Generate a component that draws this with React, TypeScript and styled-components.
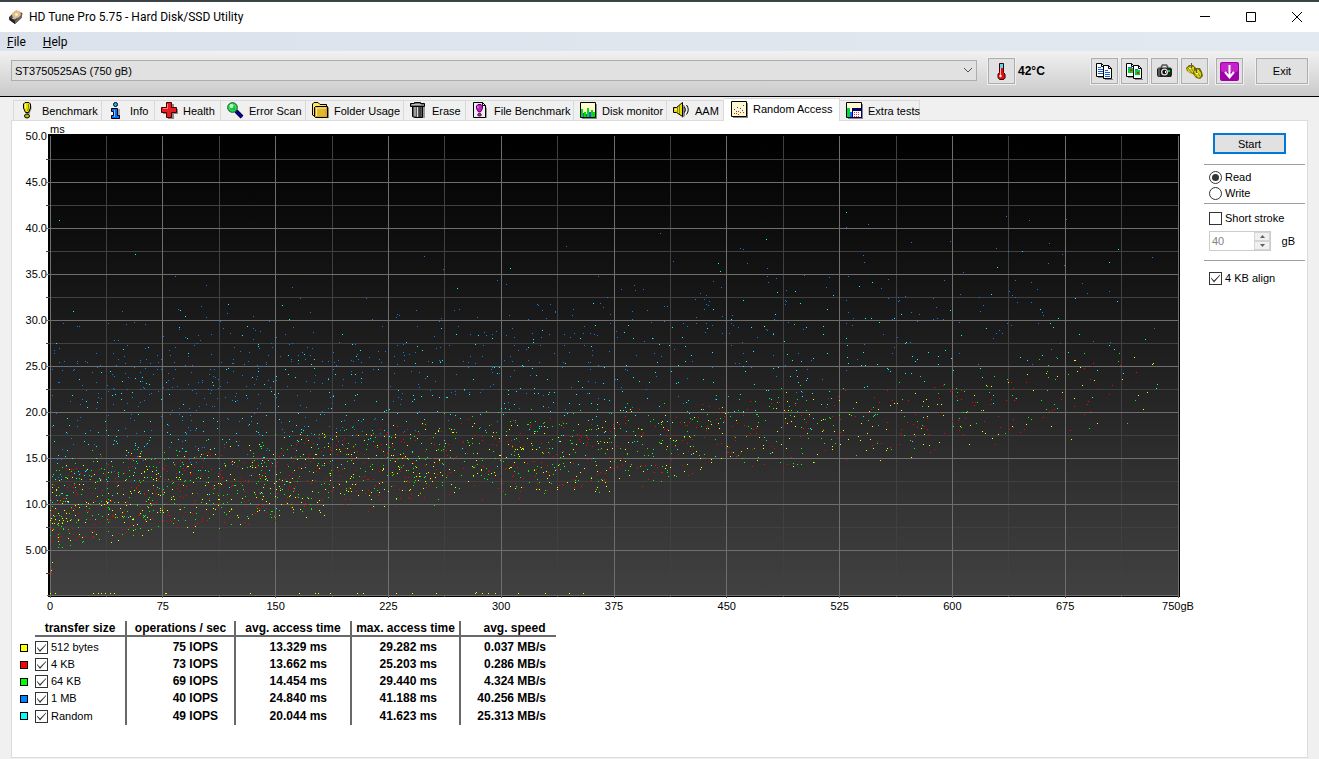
import React, { useState } from "react";
import styled, { createGlobalStyle, css } from "styled-components";

const GlobalStyle = createGlobalStyle`
  *, *::before, *::after { box-sizing: border-box; }
  body {
    margin: 0;
    background: #f0f0f0;
    color: #000;
    font: 11px/14px "Liberation Sans", Arial, sans-serif;
  }
  button, input, select { font: inherit; color: inherit; }
`;

/* ---------- window frame ---------- */

const Window = styled.div`
  display: flex;
  flex-direction: column;
  min-height: 100vh;
  border-top: 2px solid #3b4347;
`;

const TitleBar = styled.header`
  display: flex;
  align-items: center;
  height: 30px;
  padding-left: 8px;
  background: #fff;
`;

const Title = styled.h1`
  flex: 1;
  margin: 0 0 0 5px;
  font: 400 12px/16px Roboto, "Segoe UI", sans-serif;
`;

const WindowButton = styled.button`
  display: grid;
  place-items: center;
  width: 46px;
  height: 30px;
  padding: 0 0 0 2px;
  border: 0;
  background: none;
`;

const MenuBar = styled.nav`
  display: flex;
  gap: 17px;
  height: 19px;
  padding-left: 7px;
  background: linear-gradient(90deg, #dbe2eb, #e2e9f1);
`;

const MenuItem = styled.button`
  padding: 0;
  border: 0;
  background: none;
  font: 400 12px/20px Roboto, "Segoe UI", sans-serif;
`;

/* ---------- toolbar ---------- */

const Toolbar = styled.div`
  display: flex;
  align-items: flex-start;
  height: 46px;
  padding: 7px 11px 0;
  border-bottom: 1px solid #000;
  background: linear-gradient(#f1f1f1, #cacaca);
`;

const DriveField = styled.div`
  position: relative;
  flex: 1;
  margin: 2px 11px 0 0;
`;

const DriveSelect = styled.select`
  display: block;
  width: 100%;
  height: 21px;
  padding: 0 3px;
  border: 1px solid #adadad;
  border-radius: 0;
  background: #e1e1e1;
  appearance: none;
`;

const DriveArrow = styled.svg`
  position: absolute;
  top: 7px;
  right: 4px;
  pointer-events: none;
`;

const ToolButton = styled.button<{ $wide?: boolean }>`
  display: grid;
  place-items: center;
  width: ${(p) => (p.$wide ? "52px" : "27px")};
  height: 26px;
  padding: 0;
  border: 1px solid #adadad;
  background: #e1e1e1;
  box-shadow: 0 0 0 1px #f0f0f0;
`;

const Temperature = styled.output`
  width: 76px;
  padding-left: 3px;
  font: 700 12px/27px "Liberation Sans", Arial, sans-serif;
`;

const ToolGroup = styled.div`
  display: flex;
  gap: 3px;
  margin-right: 8px;
`;

const LastTool = styled.div`
  margin-right: 13px;
`;

/* ---------- tabs ---------- */

const TabStrip = styled.div`
  display: flex;
  align-items: flex-end;
  height: 23px;
  padding-left: 13px;
`;

const Tab = styled.button<{ $width: number; $active: boolean }>`
  display: grid;
  grid-template-columns: 17px auto;
  align-items: center;
  justify-content: start;
  column-gap: 5px;
  width: ${(p) => p.$width}px;
  height: 20px;
  padding: 0 0 0 6px;
  border: 1px solid #d9d9d9;
  border-width: 1px 1px 0 0;
  background: #f0f0f0;
  white-space: nowrap;

  &:first-child {
    border-left-width: 1px;
  }

  ${(p) =>
    p.$active &&
    css`
      height: 23px;
      margin-bottom: -1px;
      padding: 0 0 2px 7px;
      background: #fff;
      z-index: 1;
    `}
`;

const Panel = styled.main`
  display: flex;
  flex: 1;
  margin: 0 11px 1px;
  border: 1px solid #dcdcdc;
  background: #fff;
`;

const Results = styled.div`
  flex: 1;
  min-width: 0;
`;

/* ---------- chart ---------- */

const ChartGrid = styled.figure`
  display: grid;
  grid-template-columns: 34px 1fr;
  margin: 0;
`;

const Unit = styled.span`
  grid-column: 2;
  height: 13px;
  padding: 1px 0 0 4px;
`;

const YAxis = styled.div`
  margin: -7px -1px 0 0;
`;

const YLabel = styled.div`
  height: 46px;
  line-height: 18px;
  text-align: right;
`;

const Plot = styled.svg`
  display: block;
  width: 100%;
  height: 464px;
`;

const XAxis = styled.div`
  grid-column: 1 / -1;
  display: flex;
  justify-content: space-between;
  margin: 1px -17px 0 18px;
`;

const XLabel = styled.span`
  width: 40px;
  text-align: center;
`;

/* ---------- results table ---------- */

const Table = styled.table`
  margin: 8px 0 0 8px;
  border-collapse: separate;
  border-spacing: 0;
  table-layout: fixed;
  width: 536px;
`;

const Head = styled.th<{ $width: number; $bare?: boolean; $last?: boolean }>`
  width: ${(p) => p.$width}px;
  height: 16px;
  padding: 1px 0 0;
  border: solid #696969;
  border-width: ${(p) => (p.$bare ? "0" : p.$last ? "0 0 2px" : "0 2px 2px 0")};
  padding-left: ${(p) => (p.$last ? "12px" : "0")};
  font: 700 12px/13px "Liberation Sans", Arial, sans-serif;
  white-space: nowrap;
`;

const Cell = styled.td<{ $pad?: number; $rule?: boolean }>`
  height: 17px;
  padding: 0 ${(p) => p.$pad ?? 0}px 0 0;
  border-right: ${(p) => (p.$rule ? "2px solid #696969" : "0")};
  font: 700 12px/17px "Liberation Sans", Arial, sans-serif;
  text-align: right;

  tr:first-child > & {
    height: 19px;
    padding-top: 2px;
  }
  tr:last-child > & {
    height: 18px;
  }
`;

const Swatch = styled.span<{ $color: string }>`
  display: block;
  width: 8px;
  height: 8px;
  border: 1px solid #000;
  background: ${(p) => p.$color};
`;

/* ---------- form controls ---------- */

const CheckLabel = styled.label`
  display: flex;
  align-items: center;
  gap: 3px;
  height: 17px;
  font: 400 11px/17px "Liberation Sans", Arial, sans-serif;
`;

const CheckBox = styled.input.attrs({ type: "checkbox" })`
  flex: none;
  width: 13px;
  height: 13px;
  margin: 0;
  border: 1px solid #333;
  background: #fff;
  appearance: none;

  &:checked::before {
    content: "";
    display: block;
    width: 11px;
    height: 11px;
    background: #333;
    clip-path: polygon(1px 5px, 4px 8px, 10px 2px, 10px 3px, 4px 10px, 1px 6px);
  }
`;

const Radio = styled.input.attrs({ type: "radio" })`
  display: grid;
  place-items: center;
  flex: none;
  width: 13px;
  height: 13px;
  margin: 0;
  border: 1px solid #333;
  border-radius: 50%;
  background: #fff;
  appearance: none;

  &:checked::before {
    content: "";
    width: 7px;
    height: 7px;
    border-radius: 50%;
    background: #333;
  }
`;

const Side = styled.aside`
  width: 101px;
  margin: 12px 2px 0 23px;
`;

const StartButton = styled.button`
  display: block;
  width: 73px;
  height: 21px;
  margin: 0 0 10px 9px;
  padding: 0;
  border: 2px solid #0078d7;
  background: #e1e1e1;
`;

const Section = styled.fieldset<{ $height: number; $top: number }>`
  height: ${(p) => p.$height}px;
  margin: 0;
  padding: ${(p) => p.$top}px 0 0 5px;
  border: 0;
  border-top: 1px solid #a0a0a0;

  & > label {
    height: 16px;
  }
`;

const SizeRow = styled.div`
  display: flex;
  align-items: center;
  justify-content: space-between;
  margin-top: 5px;
  padding-right: 10px;
`;

const Spin = styled.div`
  display: flex;
  width: 62px;
  height: 20px;
  border: 1px solid #ccc;
`;

const SpinInput = styled.input`
  width: 44px;
  padding: 0 2px;
  border: 0;
  background: #fff;
  color: #838383;
`;

const SpinButtons = styled.div`
  display: grid;
  flex: 1;
`;

const SpinButton = styled.button`
  display: grid;
  place-items: center;
  padding: 0;
  border: 1px solid #d4d4d4;
  background: #f0f0f0;
`;

/* ---------- measurement data ---------- */

type Series = "bytes512" | "kb4" | "kb64" | "mb1" | "random";

const COLORS: Record<Series, string> = {
  mb1: "#0080ff",
  random: "#00ffff",
  kb64: "#00ff00",
  kb4: "#ff0000",
  bytes512: "#ffff00",
};

// Slow samples, as x,y pairs in plot units (1128 x 460, origin at the top left).
const SLOW: Record<Series, string> = {
  mb1:
    "13,187 27,190 29,190 46,217 4,214 4,217 9,212 58,187 64,204 68,204 72,175 76,188 84,186 95,188 77,209 63,217 74,220 95,212 107,219 125,140 156,149 128,173 151,170 156,181 166,184 129,193 113,200 135,201 148,199 150,204 147,207 144,209 161,198 125,211 119,214 120,219 138,220 161,218 177,177 170,185 173,192 180,197 184,211 190,215 199,216 203,180 203,192 205,194 210,195 203,203 219,185 209,212 221,207 222,211 218,219 242,151 250,162 260,176 258,184 243,191 263,196 235,198 226,201 239,208 242,207 257,211 262,212 252,216 248,219 260,219 230,220 316,162 322,183 306,184 332,190 289,206 305,208 283,216 307,218 328,215 335,215 319,221 374,120 366,174 347,178 349,179 346,181 367,190 347,209 353,208 353,216 354,219 359,218 365,216 344,220 " +
    "393,133 447,144 456,148 516,110 548,140 404,174 409,173 427,181 459,179 478,183 487,168 488,169 492,174 496,182 500,168 505,175 505,176 523,173 522,179 550,167 553,171 557,161 560,178 391,182 389,185 408,190 420,198 434,196 436,199 442,198 446,195 462,192 456,199 464,201 482,197 491,201 499,198 514,198 520,201 524,197 533,197 534,190 540,197 544,198 547,199 560,187 384,200 386,212 390,211 399,209 433,209 432,220 420,220 464,209 468,214 460,220 476,213 490,209 504,217 514,209 519,216 534,209 542,214 542,219 559,215 571,153 584,149 585,154 593,153 610,97 623,125 582,175 597,174 614,170 617,170 582,183 601,186 614,185 566,195 567,201 594,205 603,202 586,219 604,217 611,220 624,213 645,163 650,157 656,159 654,163 656,168 659,165 654,173 658,169 663,145 671,151 646,181 672,180 637,190 633,187 646,187 656,187 662,189 655,196 672,197 " +
    "690,112 693,113 697,127 717,132 717,140 718,146 726,142 754,139 736,154 735,164 736,165 735,168 681,187 683,189 688,191 679,197 682,179 692,206 681,209 716,193 717,194 707,201 723,197 724,183 738,186 753,193 693,217 723,219 748,217 818,88 796,91 813,119 814,126 861,106 900,105 913,136 946,112 956,80 958,115 979,84 999,107 998,127 1012,118 1014,129 1016,83 1102,121 779,141 776,151 798,140 838,143 831,152 838,162 796,164 798,176 803,182 848,161 849,164 848,165 855,160 883,162 894,144 886,171 861,176 869,178 883,183 887,182 893,183 842,183 867,185 910,158 929,161 933,169 930,175 965,144 981,146 987,153 959,155 962,159 965,161 967,166 981,166 992,176 993,179 1032,147 1037,157 1059,155 909,186 957,187 961,189 988,187 949,194 946,197 952,197 943,202 796,187 802,189 833,198 847,201 860,206 814,208 844,211 842,217 909,217 1001,213 1010,207 1006,221 1043,205 1060,206 1104,192 928,228 982,228 796,234",
  random:
    "9,84 85,118 23,175 6,207 73,213 98,211 130,174 135,180 129,191 137,202 138,217 178,168 197,190 192,199 208,208 208,210 232,169 239,183 238,219 254,218 292,198 302,208 310,214 306,220 356,206 367,210 372,214 460,132 407,152 543,167 391,192 406,198 428,199 442,202 492,194 483,203 483,206 478,211 545,189 530,202 541,210 425,208 578,189 574,196 583,202 602,202 609,208 619,209 635,210 622,191 632,201 668,127 670,135 663,173 657,192 716,103 727,156 745,155 693,164 750,167 725,178 681,183 701,191 756,191 723,198 734,205 641,219 662,216 703,215 737,218 " +
    "796,76 809,150 822,146 783,159 777,173 815,182 821,182 844,182 829,186 851,178 900,174 947,131 972,115 941,158 990,173 1008,182 1025,162 1059,126 1068,113 1067,165 773,190 773,198 796,202 797,209 813,216 777,217 797,221 855,207 856,206 862,220 878,216 888,220 895,214 911,199 936,192 1000,187 1003,191 970,221 992,219 1018,216 1029,198 1059,209 1064,213 1095,203 1047,234 1073,237 1107,248 1106,252 1042,261",
  kb64: "744,188 1034,217 1069,217 1068,225 989,223 1007,222 998,229 1018,238 1085,264 1077,287 1039,292",
  kb4: "1043,227 1042,230 1070,229 1034,232 1086,236 1040,243 1062,249 1047,253 1059,258 1038,265 1037,268 1024,270 1040,275 1034,278 1020,294 1,436 1,438 2,432",
  bytes512:
    "714,190 1084,221 1103,227 1102,228 1024,224 1025,224 1030,231 1027,235 1072,243 1044,244 1032,249 1097,256 1088,259 1024,262 1093,273 1047,287 1021,303 1,434 2,426 0,457 5,457 43,457 48,457 51,457 55,457 60,457 64,457 115,457 116,457 200,457 249,457 265,457 268,457 280,457 307,457 313,457 346,457 362,457 386,457 425,457 426,456 432,457 438,457 445,457 468,457 495,457 519,457 533,457",
};

// Fastest possible access for a position on the disk: seek time plus settle.
const FLOOR: [number, number][] = [
  [0, 424], [25, 417], [70, 409], [143, 402], [237, 389], [384, 370], [475, 365],
  [550, 358], [650, 347], [750, 337], [862, 324], [980, 306], [1015, 302],
];

function floorAt(x: number) {
  const i = Math.max(1, FLOOR.findIndex(([fx]) => fx >= x));
  const [x0, y0] = FLOOR[i - 1];
  const [x1, y1] = FLOOR[i];
  return y0 + ((y1 - y0) * (x - x0)) / (x1 - x0);
}

function randomSource(seed: number) {
  let a = seed;
  return () => {
    a = (a + 0x6d2b79f5) | 0;
    let t = Math.imul(a ^ (a >>> 15), 1 | a);
    t = (t + Math.imul(t ^ (t >>> 7), 61 | t)) ^ t;
    return ((t ^ (t >>> 14)) >>> 0) / 4294967296;
  };
}

const dot = (x: number, y: number) => `M${x} ${y}h1v1h-1z`;

function samples(series: Series, seed: number, tries: number) {
  const rnd = randomSource(seed);
  const out = SLOW[series].split(" ").filter(Boolean).map((p) => {
    const [x, y] = p.split(",").map(Number);
    return dot(x, y);
  });
  for (let i = 0; i < tries; i++) {
    const x = Math.floor(rnd() * 1014);
    const keep = rnd();
    const t = x / 1128;
    const base = floorAt(x);
    let y: number;
    if (series === "mb1") {
      if (keep > Math.pow(Math.max(0, 1 - x / 850), 1.4)) continue;
      y = 223 + Math.pow(rnd(), 1.4) * (base - 75 - 223);
    } else if (series === "random") {
      if (keep > 0.75 - 0.55 * t) continue;
      y = base - 12 - ((rnd() + rnd()) / 2) * 180;
    } else {
      if (keep > 1.05 - t) continue;
      const spread = (series === "kb64" ? 106 : 98) - 22 * t;
      y = base - (rnd() * 0.75 + rnd() * 0.25) * spread;
    }
    if (y > 222) out.push(dot(x, Math.round(y)));
  }
  return out.join("");
}

const SCATTER: { series: Series; path: string }[] = [
  { series: "mb1", path: samples("mb1", 11, 1060) },
  { series: "random", path: samples("random", 23, 1080) },
  { series: "kb64", path: samples("kb64", 37, 1150) },
  { series: "kb4", path: samples("kb4", 53, 1180) },
  { series: "bytes512", path: samples("bytes512", 71, 1100) },
];

const MAJOR_X = [0, 112, 225, 338, 451, 564, 676, 789, 902, 1015, 1128];
const MINOR_X = [56, 169, 282, 394, 507, 620, 733, 846, 958, 1071];
const MAJOR_Y = [46, 92, 138, 184, 230, 276, 322, 368, 414];
const MINOR_Y = [23, 69, 115, 161, 207, 253, 299, 345, 391, 437];

const line = (x: number, y: number, w: number, h: number) => `M${x} ${y}h${w}v${h}h${-w}z`;

function ScatterPlot({ visible }: { visible: Record<Series, boolean> }) {
  return (
    <Plot viewBox="-4 -2 1135 464" preserveAspectRatio="none" shapeRendering="crispEdges" role="img" aria-label="Access time by disk position">
      <defs>
        <linearGradient id="plot-bg" x1="0" y1="0" x2="0" y2="1">
          <stop offset="0" stopColor="#000" />
          <stop offset="1" stopColor="#414141" />
        </linearGradient>
      </defs>
      <rect x="-2" y="-2" width="1132" height="463" fill="#000" />
      <rect x="0" y="0" width="1128" height="460" fill="url(#plot-bg)" />
      <path fill="#404040" d={MINOR_Y.map((y) => line(-4, y, 1132, 1)).join("") + MINOR_X.map((x) => line(x, 0, 1, 461)).join("")} />
      <path fill="#6e6e6e" d={MAJOR_Y.map((y) => line(-4, y, 1132, 1)).join("") + MAJOR_X.map((x) => line(x, 0, 1, 462)).join("") + line(-3, 459, 1131, 1)} />
      {SCATTER.filter((s) => visible[s.series]).map((s) => (
        <path key={s.series} fill={COLORS[s.series]} d={s.path} />
      ))}
    </Plot>
  );
}

/* ---------- icons ---------- */

const Icon = ({ size = 17, children }: { size?: number; children: React.ReactNode }) => (
  <svg width={size} height={size} viewBox={`0 0 ${size} ${size}`} aria-hidden="true">
    {children}
  </svg>
);

const AppIcon = () => (
  <Icon size={16}>
    <path d="M1 8 8 1.500l6.500 2.500-1 5L7 15 1.500 11z" fill="#4a4a4e" />
    <path d="M1 8l6 4v3L1.500 11z" fill="#222" />
    <path d="M7 12l7-7.500-.5 4.500L7 15z" fill="#6b6765" />
    <ellipse cx="8.500" cy="5.500" rx="4.500" ry="3.500" fill="#e6bd80" transform="rotate(-25 8.500 5.500)" />
    <ellipse cx="8.500" cy="5.500" rx="1.500" ry="1.200" fill="#fff3dc" />
    <path d="M4 9l3 1 1-3" stroke="#c9c9c9" fill="none" />
  </Icon>
);

const BenchmarkIcon = () => (
  <Icon>
    <path d="M5 1.500h4l1.500 1.500v3L8.500 11h-3L3.500 6V3z" transform="translate(1 1)" fill="#999" />
    <path d="M5 .5h4L10.500 2v4L8.500 10.500h-3L3.500 6V2z" fill="#e8e000" stroke="#000" />
    <path d="M5.500 2v4" stroke="#fffbb0" />
    <path d="M8.500 2v4l-1 3" stroke="#8a8500" fill="none" />
    <ellipse cx="7" cy="14" rx="2.500" ry="2" fill="#c8c000" stroke="#000" />
  </Icon>
);

const InfoIcon = () => (
  <Icon>
    <path d="M7 7h5v10H5v-3h2z" fill="#aaa" />
    <path d="M3.500 6.500h6v7h2v3h-8v-3h2v-4h-2z" fill="#0a6cff" stroke="#000" />
    <circle cx="7.500" cy="2.500" r="2" fill="#19b4ff" stroke="#000" />
    <path d="M6.500 8v7" stroke="#6fd0ff" />
  </Icon>
);

const HealthIcon = () => (
  <Icon>
    <path d="M7 2h6v5h4v5h-4v5H7v-5H2V7h5z" fill="#888" />
    <path d="M5.500 .5h5v5h5v5h-5v5h-5v-5h-5v-5h5z" fill="#e31e24" />
    <path d="M6.500 6V2M2 6.500h5" stroke="#ff7a70" />
    <path d="M5.500 .5h5v5h5v5h-5v5h-5v-5h-5v-5h5z" fill="none" stroke="#4a0000" />
  </Icon>
);

const ErrorScanIcon = () => (
  <Icon>
    <path d="M9 9l6 6" stroke="#000" strokeWidth="4" />
    <path d="M9 9l6 6" stroke="#0000c8" strokeWidth="2" />
    <circle cx="5.500" cy="5.500" r="4.800" fill="#2be05a" stroke="#184a20" />
    <circle cx="4.500" cy="4" r="2" fill="#b8ffc4" />
    <path d="M3 7h5M7 4v4" stroke="#10b038" />
  </Icon>
);

const FolderIcon = () => (
  <Icon>
    <path d="M3 16h14V5z" fill="#888" />
    <path d="M.5 13V2L2 .5h4L8 2.500h6.500v3H3v9z" fill="#ffe860" stroke="#000" />
    <path d="M3.500 4.500h12v11h-12l-1-1v-9z" fill="#d8a81c" stroke="#000" />
    <path d="M4 6h9v8H4z" fill="#e4b82c" />
    <path d="M4.500 14V6H14" stroke="#fff0a0" fill="none" />
  </Icon>
);

const EraseIcon = () => (
  <Icon>
    <path d="M4 5h11v11H5z" fill="#999" />
    <path d="M2.500 4h10v11.500h-8l-2-1z" fill="#5a5a5a" stroke="#000" />
    <path d="M5 5v9M7.500 5v10" stroke="#ddd" />
    <path d="M10 5v10" stroke="#222" />
    <path d="M.5 1.500h4v-1h6v1h4v3H.5z" fill="#777" stroke="#000" />
    <path d="M2 2.500h9" stroke="#bbb" />
  </Icon>
);

const FileBenchIcon = () => (
  <Icon>
    <path d="M2 16h13V5z" fill="#999" />
    <path d="M1.500 .5h9l3 3v12h-12z" fill="#efefef" stroke="#000" />
    <path d="M10.500 .5v3h3z" fill="#fff" stroke="#000" />
    <path d="M6 2.500h3L10.500 4v2.500L8.500 10h-2L4.500 6.500V4z" fill="#c81ec8" stroke="#500050" />
    <path d="M6 4v2" stroke="#ffb0ff" />
    <ellipse cx="7.500" cy="12.800" rx="1.800" ry="1.300" fill="#c81ec8" stroke="#500050" />
  </Icon>
);

const MonitorIcon = () => (
  <Icon>
    <path d="M2 2h15v15H2z" fill="#888" />
    <path d="M.5 .5h15v15H.5z" fill="#ffffd0" stroke="#000" />
    <g shapeRendering="crispEdges">
      <path d="M1 7h2v8H1zM4 10h2v5H4zM7 6h2v9H7zM11 8h2v7h-2z" fill="#00e000" />
      <path d="M3 11h1v4H3zM6 12h1v3H6zM9 10h2v5H9z" fill="#3050ff" />
      <path d="M13 10h2v5h-2z" fill="#00e000" />
    </g>
  </Icon>
);

const SpeakerIcon = () => (
  <Icon>
    <path d="M9 2v14l3-2V4z" fill="#888" />
    <path d="M.5 5.500h3L9.500 .5v14l-6-4h-3z" fill="#e8dc00" stroke="#000" />
    <path d="M4.500 5v6M6.500 4v8" stroke="#8a8200" />
    <path d="M2 7.500h2" stroke="#fffbb0" />
    <path d="M11.500 5q2 2.500 0 5.500M13.500 3q3.500 4.500 0 9.500" stroke="#000" fill="none" />
  </Icon>
);

const RandomIcon = () => (
  <Icon>
    <path d="M2 2h15v15H2z" fill="#888" />
    <path d="M.5 .5h15v15H.5z" fill="#fff8c8" stroke="#000" />
    <g shapeRendering="crispEdges">
      <path d="M3 8h1v1H3zM6 6h1v1H6zM9 7h1v1H9zM12 4h1v1h-1zM11 9h1v1h-1zM5 10h1v1H5z" fill="#2040ff" />
      <path d="M3 12h1v1H3zM5 12h1v1H5zM7 10h1v1H7zM9 11h1v1H9zM12 11h1v1h-1zM7 13h1v1H7z" fill="#f02020" />
    </g>
  </Icon>
);

const ExtraIcon = () => (
  <Icon>
    <path d="M2 2h15v15H2z" fill="#888" />
    <path d="M.5 .5h15v15H.5z" fill="#ffffd0" stroke="#000" />
    <g shapeRendering="crispEdges">
      <path d="M1 6h3v9H1z" fill="#00d840" />
      <path d="M4 10h2v5H4z" fill="#2060ff" />
      <path d="M6 6h10v10H6z" fill="#000060" />
      <path d="M7 9h8v6H7z" fill="#fff" />
      <path d="M8 10h1v1H8zM10 10h1v1h-1zM12 10h1v1h-1zM8 12h1v1H8zM10 12h1v1h-1zM12 12h1v1h-1zM8 14h1v1H8zM10 14h1v1h-1zM12 14h1v1h-1z" fill="#f03040" />
    </g>
  </Icon>
);

const ThermometerIcon = () => (
  <Icon>
    <path d="M10.500 1v10l2 1.500v3l-2 1.500H8z" fill="#999" />
    <path d="M6.500 .5h4v9l1.500 1.500v3.500l-1.500 2h-4l-1.500-2V11l1.500-1.500z" fill="#e01010" stroke="#400" />
    <path d="M7 1h3v4H7z" fill="#58d8f0" />
    <path d="M7.500 5v8" stroke="#ffb0a0" />
    <circle cx="7.500" cy="13" r="1.200" fill="#fff" />
  </Icon>
);

const PageShapes = () => (
  <>
    <path d="M2 14h7v1H2zM9 16h8v1H9z" fill="#888" />
    <path d="M.5 .5h5l3 3v10h-8z" fill="#fff" stroke="#000" />
    <path d="M5.500 .5v3h3" fill="none" stroke="#000" />
    <path d="M7.500 2.500h5l3 3v10h-8z" fill="#fff" stroke="#000" />
    <path d="M12.500 2.500v3h3" fill="none" stroke="#000" />
  </>
);

const CopyTextIcon = () => (
  <Icon>
    <PageShapes />
    <path d="M2 4.500h3M2 6.500h5M2 8.500h5M2 10.500h5M9 7.500h3M9 9.500h5M9 11.500h5M9 13.500h5" stroke="#1464e0" />
  </Icon>
);

const CopyImageIcon = () => (
  <Icon>
    <PageShapes />
    <path d="M2 5h5v5H2zM9 7h5v5H9z" fill="#00d232" />
    <path d="M2 4h4v1H2zM9 6h3v1H9z" fill="#1478d2" />
    <path d="M4 6h2v2H4zM11 9h2v2h-2z" fill="#f01414" />
  </Icon>
);

const CameraIcon = () => (
  <Icon>
    <path d="M5 4.500 6.500 2h4L12 4.500" fill="none" stroke="#555" strokeWidth="1.500" />
    <path d="M1 6l1.500-1.500h12L16 6v6l-1 2H2l-1-2z" fill="#222" />
    <path d="M3 5v8.500" stroke="#888" />
    <circle cx="8.500" cy="9" r="3.500" fill="#ddd" />
    <circle cx="8.500" cy="9" r="2.200" fill="#111" />
    <path d="M9 8h1v2H9z" fill="#fff" />
    <path d="M12 7h2v2h-2z" fill="#00e020" />
  </Icon>
);

const PlugIcon = () => (
  <Icon>
    <path d="M0 5l3-3 4 0 3 3 4 0 2 4 1 4-3 3-4-1-3-4-3-1-3-2z" fill="#6c6600" />
    <path d="M1 5.500l3-2.500 4 1v4l-2 2.500-4-2zM8 8l4-2 3 4 0 3-2 2-4-2z" fill="#dcd21e" />
    <path d="M3 3l5 6M2 5l4 5M9 7l5 6M8 10l4 5" stroke="#8a8200" />
    <path d="M5.500 0v5M10.500 5v5" stroke="#555" />
    <path d="M3 5.500h2M10 10.500h2" stroke="#fffca0" />
  </Icon>
);

const SaveIcon = () => (
  <Icon size={19}>
    <rect x="0" y="0" width="19" height="19" rx="2" fill="#a000a8" />
    <rect x="1" y="1" width="17" height="9" rx="2" fill="#d83ce0" opacity=".6" />
    <path d="M9.500 3v11M5 10l4.500 5.500L14 10" fill="none" stroke="#fff" strokeWidth="2" />
  </Icon>
);

/* ---------- page ---------- */

const TABS: { label: string; width: number; icon: React.ReactNode }[] = [
  { label: "Benchmark", width: 89, icon: <BenchmarkIcon /> },
  { label: "Info", width: 53, icon: <InfoIcon /> },
  { label: "Health", width: 66, icon: <HealthIcon /> },
  { label: "Error Scan", width: 85, icon: <ErrorScanIcon /> },
  { label: "Folder Usage", width: 98, icon: <FolderIcon /> },
  { label: "Erase", width: 62, icon: <EraseIcon /> },
  { label: "File Benchmark", width: 108, icon: <FileBenchIcon /> },
  { label: "Disk monitor", width: 93, icon: <MonitorIcon /> },
  { label: "AAM", width: 57, icon: <SpeakerIcon /> },
  { label: "Random Access", width: 116, icon: <RandomIcon /> },
  { label: "Extra tests", width: 80, icon: <ExtraIcon /> },
];

const ROWS: { series: Series; name: string; values: [string, string, string, string] }[] = [
  { series: "bytes512", name: "512 bytes", values: ["75 IOPS", "13.329 ms", "29.282 ms", "0.037 MB/s"] },
  { series: "kb4", name: "4 KB", values: ["73 IOPS", "13.662 ms", "25.203 ms", "0.286 MB/s"] },
  { series: "kb64", name: "64 KB", values: ["69 IOPS", "14.454 ms", "29.440 ms", "4.324 MB/s"] },
  { series: "mb1", name: "1 MB", values: ["40 IOPS", "24.840 ms", "41.188 ms", "40.256 MB/s"] },
  { series: "random", name: "Random", values: ["49 IOPS", "20.044 ms", "41.623 ms", "25.313 MB/s"] },
];

const VALUE_PADS = [16, 23, 22, 10];
const Y_LABELS = ["50.0", "45.0", "40.0", "35.0", "30.0", "25.0", "20.0", "15.0", "10.0", "5.00"];
const X_LABELS = ["0", "75", "150", "225", "300", "375", "450", "525", "600", "675", "750gB"];

export default function App() {
  const [tab, setTab] = useState("Random Access");
  const [visible, setVisible] = useState<Record<Series, boolean>>({
    bytes512: true, kb4: true, kb64: true, mb1: true, random: true,
  });

  return (
    <Window>
      <GlobalStyle />
      <TitleBar>
        <AppIcon />
        <Title>HD Tune Pro 5.75 - Hard Disk/SSD Utility</Title>
        <WindowButton aria-label="Minimize">
          <svg width="10" height="10"><path d="M0 4.500h10" stroke="#000" /></svg>
        </WindowButton>
        <WindowButton aria-label="Maximize">
          <svg width="10" height="10"><path d="M.5 .5h9v9h-9z" fill="none" stroke="#000" /></svg>
        </WindowButton>
        <WindowButton aria-label="Close">
          <svg width="10" height="10"><path d="M0 0l10 10M10 0L0 10" stroke="#000" /></svg>
        </WindowButton>
      </TitleBar>
      <MenuBar>
        <MenuItem><u>F</u>ile</MenuItem>
        <MenuItem><u>H</u>elp</MenuItem>
      </MenuBar>
      <Toolbar>
        <DriveField>
          <DriveSelect aria-label="Drive">
            <option>ST3750525AS (750 gB)</option>
          </DriveSelect>
          <DriveArrow width="10" height="7" viewBox="0 0 10 7">
            <path d="M1 1l4 4 4-4" fill="none" stroke="#555" />
          </DriveArrow>
        </DriveField>
        <ToolButton aria-label="Temperature"><ThermometerIcon /></ToolButton>
        <Temperature>42°C</Temperature>
        <ToolGroup>
          <ToolButton aria-label="Copy text"><CopyTextIcon /></ToolButton>
          <ToolButton aria-label="Copy image"><CopyImageIcon /></ToolButton>
          <ToolButton aria-label="Screenshot"><CameraIcon /></ToolButton>
          <ToolButton aria-label="Options"><PlugIcon /></ToolButton>
        </ToolGroup>
        <LastTool>
          <ToolButton aria-label="Save"><SaveIcon /></ToolButton>
        </LastTool>
        <ToolButton $wide>Exit</ToolButton>
      </Toolbar>

      <TabStrip role="tablist">
        {TABS.map((t) => (
          <Tab
            key={t.label}
            role="tab"
            aria-selected={t.label === tab}
            $width={t.width}
            $active={t.label === tab}
            onClick={() => setTab(t.label)}
          >
            {t.icon}
            {t.label}
          </Tab>
        ))}
      </TabStrip>

      <Panel>
        <Results>
          <ChartGrid>
            <Unit>ms</Unit>
            <YAxis>
              {Y_LABELS.map((l) => <YLabel key={l}>{l}</YLabel>)}
            </YAxis>
            <ScatterPlot visible={visible} />
            <XAxis>
              {X_LABELS.map((l) => <XLabel key={l}>{l}</XLabel>)}
            </XAxis>
          </ChartGrid>
          <Table>
            <thead>
              <tr>
                <Head $width={15} $bare />
                <Head $width={92}>transfer size</Head>
                <Head $width={109}>operations / sec</Head>
                <Head $width={116}>avg. access time</Head>
                <Head $width={109}>max. access time</Head>
                <Head $width={95} $last>avg. speed</Head>
              </tr>
            </thead>
            <tbody>
              {ROWS.map((r) => (
                <tr key={r.series}>
                  <Cell><Swatch $color={COLORS[r.series]} /></Cell>
                  <Cell $rule>
                    <CheckLabel>
                      <CheckBox
                        checked={visible[r.series]}
                        onChange={(e) => setVisible({ ...visible, [r.series]: e.target.checked })}
                      />
                      {r.name}
                    </CheckLabel>
                  </Cell>
                  {r.values.map((v, i) => (
                    <Cell key={i} $pad={VALUE_PADS[i]} $rule={i < 3}>{v}</Cell>
                  ))}
                </tr>
              ))}
            </tbody>
          </Table>
        </Results>

        <Side>
          <StartButton>Start</StartButton>
          <Section $height={39} $top={4}>
            <CheckLabel><Radio name="mode" defaultChecked />Read</CheckLabel>
            <CheckLabel><Radio name="mode" />Write</CheckLabel>
          </Section>
          <Section $height={57} $top={6}>
            <CheckLabel><CheckBox />Short stroke</CheckLabel>
            <SizeRow>
              <Spin>
                <SpinInput aria-label="Short stroke size" defaultValue="40" disabled />
                <SpinButtons>
                  <SpinButton aria-label="Increase" disabled>
                    <svg width="5" height="3"><path d="M0 3 2.500 0 5 3z" fill="#606060" /></svg>
                  </SpinButton>
                  <SpinButton aria-label="Decrease" disabled>
                    <svg width="5" height="3"><path d="M0 0h5L2.500 3z" fill="#606060" /></svg>
                  </SpinButton>
                </SpinButtons>
              </Spin>
              <span>gB</span>
            </SizeRow>
          </Section>
          <Section $height={40} $top={9}>
            <CheckLabel><CheckBox defaultChecked />4 KB align</CheckLabel>
          </Section>
        </Side>
      </Panel>
    </Window>
  );
}
